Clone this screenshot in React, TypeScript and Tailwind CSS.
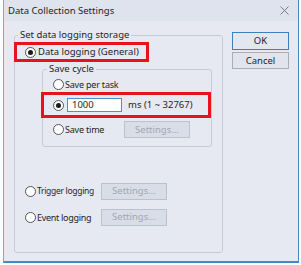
import React from "react";

function Radio({ checked = false }: { checked?: boolean }) {
  return (
    <span className="w-[11px] h-[11px] rounded-full border border-[#555] bg-white flex items-center justify-center shrink-0">
      {checked && <span className="w-[5px] h-[5px] rounded-full bg-[#1a1a1a]" />}
    </span>
  );
}

function SettingsButton() {
  return (
    <div className="w-[66px] h-[17px] shrink-0 border border-[#bcc1cd] bg-[#d9dde8] text-[#a2a6b0] flex items-center justify-center">
      Settings...
    </div>
  );
}

export default function App() {
  return (
    <div className="w-[301px] h-[265px] bg-white pl-[3px] pr-[2px] pb-[2px] font-['Noto_Sans',sans-serif] text-[9.5px] leading-none text-[#1e1e1e]">
      <div className="h-full flex flex-col bg-[#e6e9f2] border-x border-b-2 border-[#4a87c6] border-l-[#7fa6d3]">
        {/* title bar */}
        <div className="h-[21px] shrink-0 flex items-center justify-between pl-[4px] pr-[8px] bg-[#dfe3ed]">
          <span>Data Collection Settings</span>
          <svg width="9" height="9" viewBox="0 0 9 9" className="mr-[1px]">
            <path d="M0.5 0.5 L8.5 8.5 M8.5 0.5 L0.5 8.5" stroke="#7a7d85" strokeWidth="1" />
          </svg>
        </div>

        <div className="flex items-start pl-[10px] pt-[7px]">
          {/* Set data logging storage */}
          <fieldset className="w-[209px] border border-[#c6cbd6] rounded-[3px] p-0 pb-[26px]">
            <legend className="ml-[3px] px-[2px] h-[14px] leading-[14px]">Set data logging storage</legend>

            <div className="-ml-[1px] w-[135px] h-[20px] border-[3px] border-[#e8121c] flex items-center pl-[8px]">
              <Radio checked />
              <span className="ml-[2px] whitespace-nowrap">Data logging (General)</span>
            </div>

            <fieldset className="ml-[27px] w-[170px] border border-[#c6cbd6] rounded-[3px] p-0 pb-[5px]">
              <legend className="ml-[4px] px-[2px] h-[14px] leading-[14px]">Save cycle</legend>

              <div className="h-[16px] flex items-center pl-[10px]">
                <Radio />
                <span className="ml-[1px] text-[9px] tracking-[-0.2px] whitespace-nowrap">Save per task</span>
              </div>

              <div className="-ml-[2px] w-[170px] h-[26px] border-[3px] border-[#e8121c] flex items-center pl-[9px]">
                <Radio checked />
                <div className="ml-[3px] w-[55px] h-[14px] border border-[#4a90d9] bg-white flex items-center pl-[4px]">1000</div>
                <span className="ml-[6px] whitespace-nowrap">ms (1 ~ 32767)</span>
              </div>

              <div className="h-[23px] flex items-center pl-[10px]">
                <Radio />
                <span className="ml-[1px] w-[59px] shrink-0 text-[9px] tracking-[-0.2px] whitespace-nowrap">Save time</span>
                <SettingsButton />
              </div>
            </fieldset>

            <div className="mt-[35px] h-[18px] flex items-center pl-[10px]">
              <Radio />
              <span className="ml-[1px] w-[64px] shrink-0 text-[8.5px] tracking-[-0.3px] whitespace-nowrap">Trigger logging</span>
              <SettingsButton />
            </div>

            <div className="mt-[8px] h-[18px] flex items-center pl-[10px]">
              <Radio />
              <span className="ml-[1px] w-[64px] shrink-0 text-[9px] tracking-[-0.3px] whitespace-nowrap">Event logging</span>
              <SettingsButton />
            </div>
          </fieldset>

          {/* buttons */}
          <div className="ml-[9px] mt-[4px] flex flex-col gap-[2px]">
            <div className="w-[57px] h-[18px] border border-[#3d7fbf] bg-[#e3e7f0] flex items-center justify-center">OK</div>
            <div className="w-[57px] h-[17px] border border-[#a9adb7] bg-[#e1e4ec] flex items-center justify-center">Cancel</div>
          </div>
        </div>
      </div>
    </div>
  );
}
